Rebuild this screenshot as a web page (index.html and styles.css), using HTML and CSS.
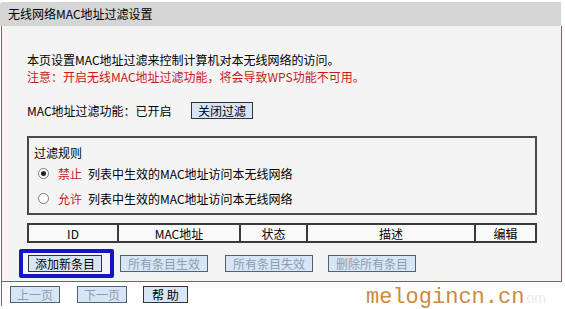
FILE: index.html
```html
<!DOCTYPE html>
<html lang="zh-CN">
<head>
<meta charset="utf-8">
<link rel="stylesheet" href="styles.css">
</head>
<body>
<div class="wrap">
  <div class="title">无线网络MAC地址过滤设置</div>
  <div class="main">
    <p class="line">本页设置MAC地址过滤来控制计算机对本无线网络的访问。</p>
    <p class="line red">注意：开启无线MAC地址过滤功能，将会导致WPS功能不可用。</p>
    <div class="status">
      <span class="label">MAC地址过滤功能：已开启</span>
      <span class="btn">关闭过滤</span>
    </div>
    <div class="rules">
      <div class="rules-title">过滤规则</div>
      <div class="radio-row"><span class="radio checked"></span><span class="red">禁止</span><span>列表中生效的MAC地址访问本无线网络</span></div>
      <div class="radio-row"><span class="radio"></span><span class="red">允许</span><span>列表中生效的MAC地址访问本无线网络</span></div>
    </div>
    <div class="table">
      <div class="cell c-id">ID</div>
      <div class="cell c-mac">MAC地址</div>
      <div class="cell c-st">状态</div>
      <div class="cell c-desc">描述</div>
      <div class="cell c-edit">编辑</div>
    </div>
    <div class="actions">
      <span class="focus"><span class="btn">添加新条目</span></span>
      <span class="btn dis">所有条目生效</span>
      <span class="btn dis">所有条目失效</span>
      <span class="btn dis">删除所有条目</span>
    </div>
  </div>
  <div class="footer">
    <span class="btn dis">上一页</span>
    <span class="btn dis">下一页</span>
    <span class="btn">帮 助</span>
  </div>
</div>
<div class="watermark">melogincn.cn<span class="wm-faint">om</span></div>
</body>
</html>
```
FILE: styles.css
```css
html, body {
  margin: 0;
  padding: 0;
  background: #ffffff;
}
body {
  font-family: "Noto Sans CJK SC", "DejaVu Sans", sans-serif;
  font-size: 12px;
  color: #000;
  width: 565px;
  height: 309px;
  overflow: hidden;
  position: relative;
}
.wrap {
  padding-top: 2px;
  width: 563px;
}
.title {
  height: 24px;
  line-height: 24px;
  background: #d5d5d5;
  padding-left: 8px;
  width: 553px;
  border-top-left-radius: 3px;
}
.main {
  margin-left: 1px;
  width: 559px;
  border-left: 1px solid #9c5454;
  border-right: 1px solid #9c5454;
  border-bottom: 1px solid #9c5454;
  background: #f5f4f4;
  padding-top: 25px;
  box-sizing: content-box;
  height: 230px;
}
.line {
  margin: 0 0 0 25px;
  line-height: 17px;
  height: 17px;
}
.red { color: #c41a1a; }
.status {
  margin: 17px 0 0 25px;
  height: 17px;
  display: flex;
  align-items: center;
}
.label { width: 164px; }
.btn {
  display: inline-flex;
  align-items: center;
  justify-content: center;
  height: 15px;
  padding: 0 6px;
  border: 1px solid #333;
  background: #d7e6f6;
  line-height: 15px;
  color: #000;
}
.btn.dis {
  color: #8d9cb0;
  border-color: #56606c;
}
.rules {
  margin: 17px 0 0 25px;
  width: 506px;
  height: 75px;
  border: 2px solid #4a4a4a;
}
.rules-title {
  margin: 6px 0 0 5px;
  height: 17px;
  line-height: 17px;
}
.radio-row {
  display: flex;
  align-items: center;
  height: 25px;
  margin-left: 9px;
}
.radio {
  width: 11px;
  height: 11px;
  border-radius: 50%;
  border: 1px solid #7a7a7a;
  background: #fff;
  margin-right: 9px;
  position: relative;
  box-sizing: border-box;
}
.radio.checked::after {
  content: "";
  position: absolute;
  left: 2px;
  top: 2px;
  width: 5px;
  height: 5px;
  border-radius: 50%;
  background: #222;
}
.radio-row .red { margin-right: 6px; }
.table {
  margin: 8px 0 0 25px;
  width: 510px;
  height: 20px;
  display: flex;
  border: 2px solid #3a3a3a;
  box-sizing: border-box;
  background: #f9f9f9;
}
.cell {
  display: flex;
  align-items: center;
  justify-content: center;
  border-right: 2px solid #3a3a3a;
  height: 16px;
}
.cell:last-child { border-right: none; }
.c-id { width: 88px; }
.c-mac { width: 120px; }
.c-st { width: 65px; }
.c-desc { width: 166px; }
.c-edit { flex: 1; }
.actions {
  margin: 6px 0 0 17px;
  display: flex;
  align-items: center;
}
.focus {
  border: 4px solid #1414c8;
  padding: 2px 8px 2px 5px;
  border-radius: 2px;
  margin-right: 6px;
  display: inline-flex;
}
.actions .btn { padding: 0 6px; }
.actions .btn.dis { padding: 0 7px; }
.actions .dis:nth-child(3) { margin-left: 17px; }
.actions .dis:nth-child(4) { margin-left: 15px; }
.footer {
  margin-left: 1px;
  width: 559px;
  height: 24px;
  border-left: 1px solid #9c5454;
  display: flex;
  align-items: center;
  padding-left: 8px;
  box-sizing: border-box;
  gap: 17px;
}
.footer .btn { padding: 0 6px; }
.footer .btn:last-child { margin-left: -1px; padding: 0 8px; }
.watermark {
  position: absolute;
  left: 345px;
  top: 287px;
  width: 220px;
  height: 22px;
  background: #ffffff;
  font-family: "Liberation Mono", monospace;
  font-size: 22px;
  line-height: 22px;
  color: #cf8a3c;
  padding-left: 21px;
  box-sizing: border-box;
  white-space: nowrap;
}
.wm-faint {
  color: #ececec;
  font-family: "Liberation Sans", sans-serif;
  font-size: 14px;
  margin-left: 2px;
}
```
